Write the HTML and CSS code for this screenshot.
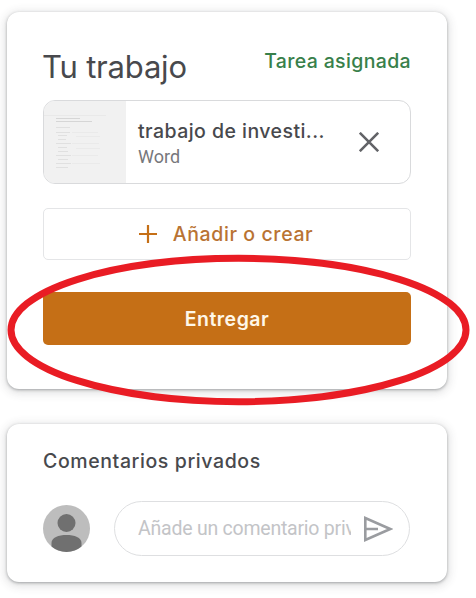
FILE: index.html
```
<!DOCTYPE html>
<html lang="es">
<head>
    <meta charset="UTF-8">
    <meta name="viewport" content="width=device-width, initial-scale=1.0">
    <title>Tu trabajo</title>
    <link rel="stylesheet" href="styles.css">
</head>
<body>
    <!-- Entrega de la tarea -->
    <section class="card work">
        <header class="work-header">
            <h2>Tu trabajo</h2>
            <span class="status">Tarea asignada</span>
        </header>

        <div class="attachment">
            <svg class="thumb" viewBox="0 0 82 82">
                <path d="M0 14.500h62" stroke="#e9e9e9"/>
                <path d="M12 17.500h24M12 20.500h36" stroke="#d6d6d6"/>
                <path d="M12 26.500h14M12 31.500h14M14 34.500h9M14 38.500h8M12 42.500h15M14 46.500h9M14 50.500h10M12 54.500h15M14 58.500h10M12 62.500h15M12 66.500h12" stroke="#e0e0e0"/>
                <path d="M28 31.500h26M32 35.500h24M28 42.500h27M32 47.500h24M28 54.500h26M28 62.500h28" stroke="#eaeaea"/>
            </svg>
            <div class="file">
                <span class="file-name">trabajo de investi...</span>
                <span class="file-type">Word</span>
            </div>
            <button class="remove" aria-label="Quitar">
                <svg width="20" height="20" viewBox="0 0 20 20">
                    <path d="M0.800 0.800L19.200 19.200M19.200 0.800L0.800 19.200" stroke="#636468" stroke-width="2.600"/>
                </svg>
            </button>
        </div>

        <button class="btn btn-add">
            <svg width="18" height="18" viewBox="0 0 18 18">
                <path d="M9 0v18M0 9h18" stroke="#c56f16" stroke-width="2.200"/>
            </svg>
            <span>Añadir o crear</span>
        </button>
        <button class="btn btn-submit"><span>Entregar</span></button>

        <!-- Marca sobre el botón Entregar -->
        <svg class="mark" width="464" height="152" viewBox="0 0 464 152">
            <ellipse cx="231.500" cy="76" rx="227.500" ry="71.700" fill="none" stroke="#e91c24" stroke-width="7"/>
        </svg>
    </section>

    <!-- Comentarios -->
    <section class="card comments">
        <h3>Comentarios privados</h3>
        <div class="comment-row">
            <svg class="avatar" viewBox="0 0 47 47">
                <circle cx="23.500" cy="23.500" r="23.500" fill="#bdbdbd"/>
                <circle cx="23.500" cy="18" r="9" fill="#707070"/>
                <path d="M8.500 41.500v-3.500C8.500 32.500 15.500 30 23.500 30S38.500 32.500 38.500 38v3.500A23.500 23.500 0 0 1 8.500 41.500z" fill="#707070"/>
            </svg>
            <div class="comment-box">
                <span class="placeholder">Añade un comentario privado...</span>
                <svg class="send" width="29" height="26" viewBox="0 0 29 26">
                    <path d="M1.300 2.100V23.900L26.200 13zM1.300 13H14" fill="none" stroke="#9a9ca0" stroke-width="2.600"/>
                </svg>
            </div>
        </div>
    </section>
</body>
</html>
```

FILE: styles.css
```
* {
    box-sizing: border-box;
}

body {
    margin: 0;
    padding: 12px 29px 0 7px;
    height: 598px;
    overflow: hidden;
    background-color: #fff;
    color: #48494d;
    font-family: Inter, "Liberation Sans", sans-serif;
}

h2, h3 {
    margin: 0;
}

button {
    padding: 0;
    border: none;
    background: none;
    font-family: inherit;
}

.card {
    position: relative;
    padding: 0 36px;
    border-radius: 12px;
    background-color: #fff;
    box-shadow: 0 1px 3px rgba(60, 64, 67, 0.4), 0 2px 10px 2px rgba(60, 64, 67, 0.16);
}

.work {
    height: 377px;
    padding-top: 35px;
}

.work-header {
    display: flex;
    justify-content: space-between;
    height: 53px;
    white-space: nowrap;
}

.work-header h2 {
    margin-left: -1px;
    font-size: 31px;
    font-weight: 400;
    line-height: 40px;
    letter-spacing: -0.2px;
}

.status {
    color: #38804a;
    font-size: 19.5px;
    font-weight: 500;
    line-height: 28px;
    letter-spacing: 0.35px;
}

.attachment {
    display: flex;
    align-items: center;
    height: 84px;
    border: 1px solid #d9dadc;
    border-radius: 12px;
    overflow: hidden;
}

.thumb {
    flex: none;
    width: 82px;
    height: 82px;
    background-color: #f1f1f1;
}

.file {
    display: flex;
    flex-direction: column;
    width: 190px;
    margin: 1px 0 0 12px;
    white-space: nowrap;
}

.file-name {
    font-size: 19.5px;
    font-weight: 500;
    line-height: 28px;
    letter-spacing: 0.45px;
}

.file-type {
    color: #77787c;
    font-family: Roboto, sans-serif;
    font-size: 18px;
    line-height: 24px;
}

.remove {
    display: flex;
    margin-left: 31px;
}

.btn {
    display: flex;
    align-items: center;
    justify-content: center;
    width: 100%;
    border-radius: 5px;
    font-size: 19.5px;
    font-weight: 500;
}

.btn-add {
    gap: 16px;
    height: 52px;
    margin-top: 24px;
    padding-right: 2px;
    border: 1px solid #e4e5e7;
    color: #b97333;
    letter-spacing: 0.6px;
}

.btn-submit {
    height: 53px;
    margin-top: 32px;
    background-color: #c56f16;
    color: #fff7e8;
    font-weight: 600;
    letter-spacing: 0.5px;
}

.mark {
    position: absolute;
    left: 0;
    top: 241.5px;
    pointer-events: none;
}

.comments {
    height: 158px;
    margin-top: 35px;
    padding-top: 23px;
}

.comments h3 {
    font-size: 19.5px;
    font-weight: 500;
    line-height: 28px;
    letter-spacing: 0.6px;
    white-space: nowrap;
}

.comment-row {
    display: flex;
    align-items: center;
    gap: 24px;
    margin-top: 26px;
}

.avatar {
    flex: none;
    width: 47px;
    height: 47px;
}

.comment-box {
    display: flex;
    align-items: center;
    width: 296px;
    height: 55px;
    padding-left: 23px;
    border: 1px solid #dedfe1;
    border-radius: 28px;
}

.placeholder {
    width: 213px;
    overflow: hidden;
    color: #c3c4c7;
    font-family: Roboto, sans-serif;
    font-size: 19.5px;
    line-height: 28px;
    letter-spacing: -0.23px;
    white-space: nowrap;
}

.send {
    flex: none;
    margin-left: 13px;
}
```
